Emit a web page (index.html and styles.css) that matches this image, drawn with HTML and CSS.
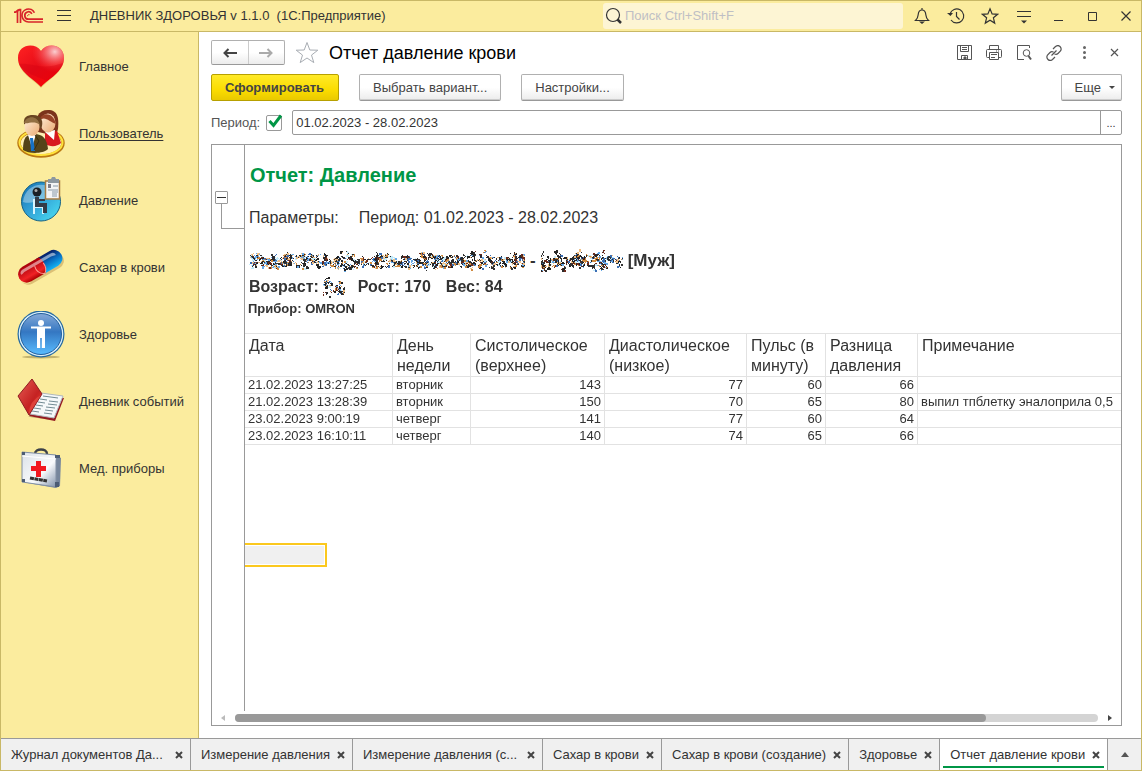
FILE: index.html
```html
<!DOCTYPE html>
<html lang="ru">
<head>
<meta charset="utf-8">
<title>ДНЕВНИК ЗДОРОВЬЯ</title>
<link rel="stylesheet" href="styles.css">
</head>
<body>
<div class="window">
  <header class="titlebar">
    <svg class="logo" width="30" height="16" viewBox="0 0 30 16" fill="none" stroke="#d8232a" stroke-width="1.700">
      <path d="M0 4.200h1.500L3.500 2.500v12.500M6.500 15V1.500H5.500L3 3.500"/>
      <path d="M20.400 4.750A6.500 6.500 0 1 0 14.500 14H29"/>
      <path d="M17.850 5.950A3.700 3.700 0 1 0 14.500 11.200H29"/>
      <path d="M13.500 8.200a1.500 1.500 0 0 1 2-1.500" stroke-width="1"/>
    </svg>
    <button class="icon-btn menu-btn" aria-label="Меню"><svg width="16" height="16" viewBox="0 0 16 16" stroke="#333"><path d="M1 2.500h14M1 7.500h14M1 12.500h14"/></svg></button>
    <span class="app-title">ДНЕВНИК ЗДОРОВЬЯ v 1.1.0&nbsp; (1С:Предприятие)</span>
    <label class="search">
      <svg width="18" height="18" viewBox="0 0 18 18" fill="none" stroke="#333"><circle cx="8" cy="8" r="6.500" stroke-width="1.200"/><path d="m12.500 12.500 3.500 3.500" stroke-width="2.500"/></svg>
      <input type="text" placeholder="Поиск Ctrl+Shift+F" aria-label="Поиск">
    </label>
    <div class="window-tools">
      <button class="icon-btn" aria-label="Оповещения"><svg width="18" height="18" viewBox="0 0 18 18" fill="none" stroke="#333" stroke-width="1.200"><path d="M9 1v2M2.500 13.500C5 11 5 10 5.200 7.500 5.500 4.500 7 3 9 3s3.500 1.500 3.800 4.500C13 10 13 11 15.500 13.500z"/><path d="M6 14.500h6L9 17z" fill="#333" stroke="none"/></svg></button>
      <button class="icon-btn" aria-label="История"><svg width="18" height="18" viewBox="0 0 18 18" fill="none" stroke="#333" stroke-width="1.200"><path d="M3 7A7 7 0 1 1 4 13"/><path d="M9.500 5v4.500l3 3"/><path d="M0 6h6L3.500 9z" fill="#333" stroke="none"/></svg></button>
      <button class="icon-btn" aria-label="Избранное"><svg width="18" height="18" viewBox="0 0 18 18" fill="none" stroke="#333" stroke-width="1.200"><path d="m9 1.800 2.100 5.100 5.500.4-4.200 3.500 1.300 5.300L9 13.200l-4.700 2.900 1.300-5.300L1.400 7.300l5.500-.4z"/></svg></button>
      <button class="icon-btn" aria-label="Настройки панели"><svg width="18" height="18" viewBox="0 0 18 18" stroke="#333"><path d="M2 4.500h14M2 9.500h14"/><path d="M6 13.500h6L9 16.500z" fill="#333" stroke="none"/></svg></button>
      <button class="icon-btn" aria-label="Свернуть"><svg width="18" height="18" viewBox="0 0 18 18" stroke="#333"><path d="M5 13.500h9"/></svg></button>
      <button class="icon-btn" aria-label="Развернуть"><svg width="18" height="18" viewBox="0 0 18 18" fill="none" stroke="#333"><path d="M5.500 5.500h8v8h-8z"/></svg></button>
      <button class="icon-btn" aria-label="Закрыть"><svg width="18" height="18" viewBox="0 0 18 18" stroke="#333" stroke-width="1.200"><path d="m4.500 4.500 9 9m0-9-9 9"/></svg></button>
    </div>
  </header>

  <div class="workspace">
    <nav class="sidebar">
      <a class="nav-item" href="#">
        <svg width="48" height="48" viewBox="0 0 48 48">
          <defs><linearGradient id="heart" x1="0" y1="0" x2="1" y2="1"><stop offset="0" stop-color="#f22"/><stop offset=".45" stop-color="#e80d18"/><stop offset="1" stop-color="#f00"/></linearGradient><radialGradient id="gloss" cx=".8" cy=".15" r=".5"><stop offset="0" stop-color="#fff" stop-opacity=".8"/><stop offset="1" stop-color="#f55" stop-opacity="0"/></radialGradient></defs>
          <path d="M24 45C17 37 1 30 1 15 1 2 18 0 24 8 30 0 47 2 47 15 47 29 31 37 24 45z" fill="#a80" opacity=".25"/>
          <path d="M24 44C17 36 1 29 1 15 1 1 18-1 24 8 30-1 47 1 47 15 47 29 31 36 24 44z" fill="url(#heart)"/>
          <path d="M24 44C17 36 1 29 1 15 1 1 18-1 24 8 30-1 47 1 47 15 47 29 31 36 24 44z" fill="url(#gloss)"/>
          <path d="M2 21C14 19 24 28 46 20 44 28 36 33 30 38 20 33 8 31 2 21z" fill="#d00010" opacity=".35"/>
        </svg>
        <span>Главное</span>
      </a>
      <a class="nav-item nav-item--current" href="#">
        <svg width="48" height="48" viewBox="0 0 48 48">
          <defs><linearGradient id="skin" x1="0" y1="0" x2="1" y2="1"><stop offset="0" stop-color="#fff0da"/><stop offset="1" stop-color="#eaaa72"/></linearGradient></defs>
          <ellipse cx="24" cy="33" rx="22" ry="13" fill="#fff0b4" stroke="#bb7812" stroke-width="3.500"/>
          <ellipse cx="24" cy="32.500" rx="21.500" ry="12.500" fill="none" stroke="#ffe23c" stroke-width="2"/>
          <path d="M21 22C17 8 21 0 31 0c10 0 11 8 10 19l-2 7z" fill="#7b341b"/>
          <path d="M28 23l12-2 4 12c-4 4-11 4-16 1z" fill="#d71920"/>
          <path d="m28 22 10-2-1 10z" fill="#fff"/>
          <ellipse cx="31" cy="13" rx="7.500" ry="9.500" fill="url(#skin)"/>
          <path d="M22 11C24 2 36 1 39 14 32 12 28 5 22 11z" fill="#964326"/>
          <path d="M6 40c0-12 3-16 11-16 9 0 13 5 14 15-5 5-19 5-25 1z" fill="#554418"/>
          <path d="m11 25 8-1-4 14z" fill="#fff"/><path d="m13 28 3 0 2 13-4 0z" fill="#1671c4"/>
          <path d="m18 25 4 6-5 9" fill="none" stroke="#382d10"/>
          <path d="M7 14C6 7 10 5 16 5c9 0 11 7 8 14z" fill="#694522"/>
          <ellipse cx="15" cy="17" rx="7.500" ry="9" fill="url(#skin)"/>
          <path d="M7 13c2-7 13-9 16 2-6-5-11-1-16-2z" fill="#927043"/>
        </svg>
        <span>Пользователь</span>
      </a>
      <a class="nav-item" href="#">
        <svg width="48" height="48" viewBox="0 0 48 48">
          <defs><linearGradient id="ball" x1="0" y1="0" x2="1" y2="1"><stop offset="0" stop-color="#126db0"/><stop offset=".5" stop-color="#34a5d8"/><stop offset="1" stop-color="#4be2f5"/></linearGradient></defs>
          <circle cx="24" cy="24.500" r="19.500" fill="url(#ball)" stroke="#176284"/>
          <path d="M6 25C8 3 38 2 41 22 27 17 19 29 6 25z" fill="#fff" opacity=".35"/>
          <path d="M17 22v15M17 30h9v7" fill="none" stroke="#d7f5ff" stroke-width="2"/>
          <circle cx="20" cy="15" r="4.500" fill="#1b2026"/><circle cx="19" cy="13.500" r="1.500" fill="#aaa"/>
          <path d="M20 20v8h8v8" fill="none" stroke="#343c48" stroke-width="4"/><path d="M22 23h6" stroke="#343c48" stroke-width="2"/>
          <path d="M28.500 4h14v18h-14z" fill="#f3f4f5" stroke="#a77c43" stroke-width="1.500"/><path d="M31 2h3l1-2h3l1 2h3v4H31z" fill="#8d98a0"/>
          <path d="M31 8h3M31 10h3" stroke="#556" stroke-width="1.500"/><path d="M36 9h5M31 13h10M35 15h6M35 17h5M35 19h5" stroke="#8898a6"/>
        </svg>
        <span>Давление</span>
      </a>
      <a class="nav-item" href="#">
        <svg width="48" height="48" viewBox="0 0 48 48">
          <defs><linearGradient id="red" x1="0" y1="0" x2="0" y2="1"><stop offset="0" stop-color="#a7000b"/><stop offset=".7" stop-color="#f02225"/><stop offset="1" stop-color="#a00"/></linearGradient><linearGradient id="blue" x1="0" y1="0" x2="0" y2="1"><stop offset="0" stop-color="#061c64"/><stop offset=".5" stop-color="#086cc0"/><stop offset="1" stop-color="#13b3f4"/></linearGradient></defs>
          <g transform="rotate(-30 24 23)">
            <path d="M8 17h32a8 8 0 0 1 0 16H8a8 8 0 0 1-8-7 8 8 0 0 0 8 5" fill="#965b16" opacity=".3"/>
            <path d="M24 13.500h15.500a8.500 8.500 0 0 1 0 17H24z" fill="url(#blue)"/>
            <path d="M27 13.500H8a8.500 8.500 0 0 0 0 17h17q6-8 2-17z" fill="url(#red)"/>
            <path d="M19 19q-2 8 5 11.500 5-3 4-10" stroke="#ff9b92" fill="none"/>
            <path d="M6 16h33q4 0 4 4-5-2-10-1H7q-5 2-4 0 0-2 3-3z" fill="#fff" opacity=".5"/>
          </g>
        </svg>
        <span>Сахар в крови</span>
      </a>
      <a class="nav-item" href="#">
        <svg width="48" height="48" viewBox="0 0 48 48">
          <defs><linearGradient id="health" x1="0" y1="0" x2="0" y2="1"><stop offset="0" stop-color="#84a8d7"/><stop offset=".45" stop-color="#3477c2"/><stop offset="1" stop-color="#58bcff"/></linearGradient></defs>
          <ellipse cx="24" cy="46" rx="19" ry="1.500" fill="#8c7c3d" opacity=".5"/>
          <circle cx="24" cy="23" r="23.500" fill="#23689f"/><circle cx="24" cy="23" r="22.300" fill="#d9effa"/><circle cx="24" cy="23" r="20.500" fill="url(#health)" stroke="#235f9d"/>
          <circle cx="24" cy="12" r="3" fill="#fff"/><path d="M14 15.500h20v2h-6V37h-3.200V27h-1.600v10H20V17.500h-6z" fill="#fff"/>
        </svg>
        <span>Здоровье</span>
      </a>
      <a class="nav-item" href="#">
        <svg width="48" height="48" viewBox="0 0 48 48">
          <defs><linearGradient id="cover" x1="0" y1="0" x2="1" y2="1"><stop offset="0" stop-color="#e75c54"/><stop offset=".6" stop-color="#c52222"/><stop offset="1" stop-color="#f24434"/></linearGradient></defs>
          <path d="M3 34l10 5 30 4-32-5z" fill="#6e5a2d" opacity=".5"/>
          <path d="M24 18 47 20 38 43 12 38z" fill="#941b22"/><path d="M24 15 46 18 37 40 13 36z" fill="#f5f8fa" stroke="#b0b8bd"/>
          <path d="M15 1 1 18 12 37 25 16z" fill="url(#cover)" stroke="#8f1c21"/><path d="M12 36Q12 23 24 17z" fill="#f96a5b" opacity=".4"/>
          <path d="m26 18 15 2M23 21l7 1M21 24l7 1M19 27l7 1M17 30l7 1M15 33l7 1M32 23l9 1M31 26l9 1M29 29l9 1M28 32l8 1M27 35l8 1" stroke="#738b94"/>
        </svg>
        <span>Дневник событий</span>
      </a>
      <a class="nav-item" href="#">
        <svg width="48" height="48" viewBox="0 0 48 48">
          <defs><linearGradient id="case" x1="0" y1="0" x2="1" y2="1"><stop offset="0" stop-color="#dbe1e8"/><stop offset=".6" stop-color="#f8fafc"/><stop offset="1" stop-color="#8394ac"/></linearGradient></defs>
          <path d="M18 9c0-6 12-6 12 0" fill="none" stroke="#3c4148" stroke-width="2.500"/>
          <path d="M5 7 39 10 44 13 43 41 39 43 5 37z" fill="#76869c"/><path d="M5 7 39 10 39 42 5 37z" fill="url(#case)" stroke="#8290a4"/>
          <path d="M5 11 39 14" stroke="#fff"/><path d="M5 7h3v3H5zm0 27h3v3H5zm33-24h5v3h-5zm0 27h4v5h-4z" fill="#4c5c74"/>
          <path d="M19 16h5v5h5v5h-5v6h-5v-6h-5v-5h5z" fill="#f21820"/><path d="m13 33 17 3" stroke="#333" stroke-width="3" stroke-dasharray="4 .5"/>
        </svg>
        <span>Мед. приборы</span>
      </a>
    </nav>

    <main class="page">
      <div class="page-head">
        <div class="history">
          <button aria-label="Назад"><svg width="16" height="12" viewBox="0 0 16 12" fill="none" stroke="#444" stroke-width="2"><path d="M15 6H3M6.500 2 2.500 6l4 4"/></svg></button>
          <button aria-label="Вперед"><svg width="16" height="12" viewBox="0 0 16 12" fill="none" stroke="#aaa" stroke-width="2"><path d="M1 6h12M9.500 2l4 4-4 4"/></svg></button>
        </div>
        <button class="icon-btn" aria-label="В избранное"><svg width="24" height="24" viewBox="0 0 24 24" fill="none" stroke="#a8adb3"><path d="m12 1.500 2.800 7.500 8 .2-6.300 4.900 2.300 7.500L12 17l-6.800 4.600 2.300-7.500L1.200 9.200l8-.2z"/></svg></button>
        <h1>Отчет давление крови</h1>
        <div class="page-tools">
          <button class="icon-btn" aria-label="Сохранить"><svg width="16" height="16" viewBox="0 0 16 16" fill="none" stroke="#555"><path d="M1.500.500h14v14h-14zM4.500.500v6h8v-6M6 2.500h5M6 4.500h5M5.500 14.500v-4h6v4"/><path d="M8 12h2v2H8z" fill="#555"/></svg></button>
          <button class="icon-btn" aria-label="Печать"><svg width="16" height="16" viewBox="0 0 16 16" fill="none" stroke="#555"><path d="M3.500 4V.500h9V4M3.500 12.500h-2Q.5 12.500.5 11.500v-6Q.5 4.500 1.500 4.500h13q1 0 1 1v6q0 1-1 1h-2M3.500 7.500h9v7h-9zM5 9.500h6M5 12.500h4M10 6h1M12 6h1"/></svg></button>
          <button class="icon-btn" aria-label="Просмотр"><svg width="16" height="16" viewBox="0 0 16 16" fill="none" stroke="#555"><path d="M13.500 3V.500h-12v14H8"/><circle cx="10.500" cy="8" r="3.300"/><path d="m12.500 11 2.500 3.500" stroke-width="2"/></svg></button>
          <button class="icon-btn" aria-label="Ссылка"><svg width="16" height="16" viewBox="0 0 16 16" fill="none" stroke="#555" stroke-width="1.200"><path d="m7 4 2.500-2.500q2.500-2 4.500 0t.5 4.500L12 8.500q-1.500 1.500-3.500.5M9 12l-2.500 2.500q-2.500 2-4.500 0T1.500 10L4 7.500Q5.500 6 7.500 7M5.500 10.500l5-5"/></svg></button>
          <button class="icon-btn" aria-label="Еще действия"><svg width="16" height="16" viewBox="0 0 16 16" fill="#666"><circle cx="8.500" cy="2.500" r="1.500"/><circle cx="8.500" cy="7.500" r="1.500"/><circle cx="8.500" cy="12.500" r="1.500"/></svg></button>
          <button class="icon-btn" aria-label="Закрыть отчет"><svg width="16" height="16" viewBox="0 0 16 16" stroke="#555" stroke-width="1.200"><path d="m5 4 7 7m0-7-7 7"/></svg></button>
        </div>
      </div>

      <div class="commands">
        <button class="btn btn--primary">Сформировать</button>
        <button class="btn">Выбрать вариант...</button>
        <button class="btn">Настройки...</button>
        <button class="btn btn--more">Еще <svg width="6" height="3" viewBox="0 0 6 3"><path d="M0 0h6L3 3z" fill="#444"/></svg></button>
      </div>

      <div class="filter">
        <label for="use-period">Период:</label>
        <span class="check">
          <input type="checkbox" id="use-period" checked>
          <svg width="18" height="18" viewBox="0 0 18 18" fill="none" stroke="#009646" stroke-width="3"><path d="m3.500 8 4 4.500L15 2.500"/></svg>
        </span>
        <div class="field">
          <input type="text" value="01.02.2023 - 28.02.2023" aria-label="Значение периода">
          <button aria-label="Выбрать период">...</button>
        </div>
      </div>

      <section class="report">
        <div class="report-body">
          <div class="outline">
            <button class="fold" aria-label="Свернуть группу"><svg width="11" height="11" viewBox="0 0 11 11"><path d="M1 5.500h9" stroke="#333"/></svg></button>
            <div class="fold-line"></div>
          </div>
          <div class="sheet">
            <h2>Отчет: Давление</h2>
            <p class="params"><span>Параметры:</span><span>Период: 01.02.2023 - 28.02.2023</span></p>
            <p class="person"><canvas class="scribble" width="276" height="24" data-seed="7"></canvas><span>-</span><canvas class="scribble" width="82" height="24" data-seed="19"></canvas><span>[Муж]</span></p>
            <p class="person person--stats"><span>Возраст:</span><canvas class="scribble" width="22" height="24" data-seed="31"></canvas><span class="stat">Рост: 170</span><span class="stat">Вес: 84</span></p>
            <p class="device">Прибор: OMRON</p>
            <table class="data">
              <colgroup><col class="c-date"><col class="c-day"><col class="c-sys"><col class="c-dia"><col class="c-pulse"><col class="c-diff"><col></colgroup>
              <thead>
                <tr><th>Дата</th><th>День недели</th><th>Систолическое (верхнее)</th><th>Диастолическое (низкое)</th><th>Пульс (в минуту)</th><th>Разница давления</th><th>Примечание</th></tr>
              </thead>
              <tbody>
                <tr><td>21.02.2023 13:27:25</td><td>вторник</td><td class="num">143</td><td class="num">77</td><td class="num">60</td><td class="num">66</td><td></td></tr>
                <tr><td>21.02.2023 13:28:39</td><td>вторник</td><td class="num">150</td><td class="num">70</td><td class="num">65</td><td class="num">80</td><td>выпил тпблетку эналоприла 0,5</td></tr>
                <tr><td>23.02.2023 9:00:19</td><td>четверг</td><td class="num">141</td><td class="num">77</td><td class="num">60</td><td class="num">64</td><td></td></tr>
                <tr><td>23.02.2023 16:10:11</td><td>четверг</td><td class="num">140</td><td class="num">74</td><td class="num">65</td><td class="num">66</td><td></td></tr>
              </tbody>
            </table>
            <div class="cell-cursor"></div>
          </div>
        </div>
        <div class="scrollbar">
          <svg width="4" height="6" viewBox="0 0 4 6"><path d="M4 0v6L0 3z" fill="#bbb"/></svg>
          <div class="track"><div class="thumb"></div></div>
          <svg width="4" height="6" viewBox="0 0 4 6"><path d="M0 0v6l4-3z" fill="#444"/></svg>
        </div>
      </section>
    </main>
  </div>

  <footer class="tabs">
    <div class="tab tab--long"><a href="#">Журнал документов Да...</a><button aria-label="Закрыть"><svg width="8" height="8" viewBox="0 0 8 8"><path d="m1 1 6 6m0-6-6 6"/></svg></button></div>
    <div class="tab"><a href="#">Измерение давления</a><button aria-label="Закрыть"><svg width="8" height="8" viewBox="0 0 8 8"><path d="m1 1 6 6m0-6-6 6"/></svg></button></div>
    <div class="tab tab--long"><a href="#">Измерение давления (с...</a><button aria-label="Закрыть"><svg width="8" height="8" viewBox="0 0 8 8"><path d="m1 1 6 6m0-6-6 6"/></svg></button></div>
    <div class="tab"><a href="#">Сахар в крови</a><button aria-label="Закрыть"><svg width="8" height="8" viewBox="0 0 8 8"><path d="m1 1 6 6m0-6-6 6"/></svg></button></div>
    <div class="tab"><a href="#">Сахар в крови (создание)</a><button aria-label="Закрыть"><svg width="8" height="8" viewBox="0 0 8 8"><path d="m1 1 6 6m0-6-6 6"/></svg></button></div>
    <div class="tab"><a href="#">Здоровье</a><button aria-label="Закрыть"><svg width="8" height="8" viewBox="0 0 8 8"><path d="m1 1 6 6m0-6-6 6"/></svg></button></div>
    <div class="tab tab--active"><a href="#">Отчет давление крови</a><button aria-label="Закрыть"><svg width="8" height="8" viewBox="0 0 8 8"><path d="m1 1 6 6m0-6-6 6"/></svg></button></div>
    <button class="tabs-more" aria-label="Все окна"><svg width="8" height="5" viewBox="0 0 8 5"><path d="M4 0l4 5H0z" fill="#555"/></svg></button>
  </footer>
</div>
<script src="scribble.js"></script>
</body>
</html>
```

FILE: styles.css
```css
* { box-sizing: border-box; }

body {
  margin: 0;
  font: 13px/16px "Liberation Sans", Arial, sans-serif;
  color: #333;
  background: #fff;
}

h1, h2, p { margin: 0; }
a { color: inherit; text-decoration: none; }
svg { display: block; flex: none; }
button, input { font: inherit; color: inherit; }
button { padding: 0; border: 0; background: none; }

.window {
  display: flex;
  flex-direction: column;
  min-height: 100vh;
  border: 1px solid #c9b866;
}

.titlebar {
  display: flex;
  align-items: center;
  height: 31px;
  padding: 0 6px 0 13px;
  background: #fbec9e;
  border-bottom: 1px solid #c9b866;
}
.icon-btn { display: grid; place-items: center; }
.menu-btn { margin-left: 12px; }
.app-title { margin-left: 18px; }
.search {
  display: flex;
  align-items: center;
  gap: 2px;
  width: 300px;
  height: 26px;
  margin-left: auto;
  padding-left: 2px;
  background: #fdf5d4;
  border-radius: 3px;
}
.search input {
  flex: 1;
  min-width: 0;
  padding: 0;
  border: 0;
  outline: 0;
  background: none;
}
.search input::placeholder { color: #bfbfc4; opacity: 1; }
.window-tools { display: flex; gap: 16px; margin-left: 10px; }

.workspace { display: flex; flex: 1; }

.sidebar {
  display: flex;
  flex-direction: column;
  gap: 19px;
  width: 198px;
  flex: none;
  padding: 11px 0 0 16px;
  background: #fbec9e;
  border-right: 1px solid #c9b866;
}
.nav-item { display: flex; align-items: center; gap: 14px; height: 48px; }
.nav-item--current span { text-decoration: underline; text-underline-offset: 2px; }

.page {
  display: flex;
  flex-direction: column;
  flex: 1;
  min-width: 0;
  padding: 8px 19px 12px 12px;
}
.page-head { display: flex; align-items: center; gap: 10px; height: 25px; }
.history {
  display: flex;
  width: 74px;
  height: 25px;
  border: 1px solid #b0b0b0;
  border-bottom-color: #999;
  border-radius: 2px;
  background: linear-gradient(#fff 50%, #ececec);
}
.history button { flex: 1; display: grid; place-items: center; }
.history button + button { border-left: 1px solid #ccc; }
h1 { font-size: 18px; line-height: 24px; font-weight: normal; color: #000; }
.page-tools { display: flex; gap: 14px; margin-left: auto; }

.commands { display: flex; gap: 20px; margin-top: 9px; }
.btn {
  height: 27px;
  padding: 0 13px;
  border: 1px solid #b0b0b0;
  border-bottom-color: #999;
  border-radius: 2px;
  background: linear-gradient(#fff 50%, #ececec);
  box-shadow: inset 0 -1px #ccc;
  color: #444;
}
.btn--primary {
  padding: 0 14px 0 13px;
  font-weight: bold;
  border-color: #b7a000;
  background: linear-gradient(#ffea28, #fbdc00 60%, #e9c900);
  box-shadow: none;
}
.btn--more { display: flex; align-items: center; gap: 8px; margin-left: auto; padding-right: 6px; }

.filter { display: flex; align-items: center; margin-top: 9px; color: #555; }
.check { position: relative; margin: 0 10px 0 6px; }
.check input {
  display: block;
  appearance: none;
  width: 16px;
  height: 16px;
  margin: 0;
  border: 1px solid #999;
  border-radius: 2px;
  background: #fff;
}
.check svg { position: absolute; left: 0; top: -2px; pointer-events: none; }
.check input:not(:checked) + svg { display: none; }
.field {
  display: flex;
  flex: 1;
  height: 25px;
  border: 1px solid #999;
  border-radius: 2px;
}
.field input {
  flex: 1;
  min-width: 0;
  padding: 0 3px;
  border: 0;
  outline: 0;
  background: none;
  color: #333;
}
.field button { width: 21px; border-left: 1px solid #999; color: #333; font-size: 11px; }

.report {
  display: flex;
  flex-direction: column;
  flex: 1;
  margin-top: 9px;
  border: 1px solid #999;
}
.report-body { display: flex; flex: 1; }
.outline {
  width: 33px;
  flex: none;
  padding: 46px 0 0 3px;
  border-right: 1px solid #999;
}
.fold {
  display: grid;
  place-items: center;
  width: 13px;
  height: 13px;
  border: 1px solid #999;
  border-radius: 1px;
  background: #fff;
}
.fold-line {
  height: 25px;
  margin-left: 6px;
  border: solid #999;
  border-width: 0 0 1px 1px;
}

.sheet { flex: 1; min-width: 0; padding-top: 18px; }
h2 { padding-left: 5px; font-size: 20px; line-height: 24px; color: #009646; }
.params {
  display: flex;
  gap: 20px;
  margin-top: 19px;
  padding-left: 4px;
  font-size: 16px;
  line-height: 24px;
}
.person {
  display: flex;
  align-items: center;
  gap: 5px;
  margin-top: 18px;
  padding-left: 4px;
  font-size: 17px;
  line-height: 26px;
  font-weight: bold;
}
.person--stats { gap: 4px; margin-top: 0; font-size: 16px; }
.scribble { display: block; flex: none; }
.stat { padding: 0 2px 0 9px; }
.device { padding-left: 3px; line-height: 18px; font-weight: bold; }

.data {
  width: 100%;
  margin-top: 15px;
  table-layout: fixed;
  border-collapse: separate;
  border-spacing: 0;
  border-top: 1px solid #e2e2e2;
}
.data th, .data td {
  border: solid #e2e2e2;
  border-width: 0 1px 1px 0;
}
.data th:last-child, .data td:last-child { border-right: 0; }
.data th {
  height: 43px;
  padding: 2px 4px 0;
  vertical-align: top;
  text-align: left;
  font-size: 16px;
  line-height: 20px;
  font-weight: normal;
}
.data td { height: 17px; padding: 0 3px; white-space: nowrap; }
.data .num { text-align: right; }
.c-date { width: 148px; }
.c-day { width: 78px; }
.c-sys { width: 134px; }
.c-dia { width: 142px; }
.c-pulse { width: 79px; }
.c-diff { width: 92px; }

.cell-cursor {
  width: 82px;
  height: 24px;
  margin-top: 98px;
  padding: 1px 1px 1px 0;
  border: 2px solid #fbc81e;
  border-left: 0;
  background: #f0f0f0 content-box;
}

.scrollbar {
  display: flex;
  align-items: center;
  gap: 10px;
  height: 14px;
  padding: 0 9px;
}
.track { flex: 1; height: 8px; border-radius: 4px; background: #d4d4d4; }
.thumb { width: 87%; height: 8px; border-radius: 4px; background: #999; }

.tabs {
  display: flex;
  height: 32px;
  border-top: 1px solid #999;
  background: #f0f0f0;
}
.tab {
  display: flex;
  align-items: center;
  justify-content: space-between;
  gap: 7px;
  padding: 0 7px 0 10px;
  border-right: 1px solid #999;
  white-space: nowrap;
}
.tab--long { width: 190px; }
.tab--active { background: #fff; box-shadow: inset 3px 0 #fff, inset -3px 0 #fff, inset 0 -2px #fff, inset 0 -4px #009646; }
.tab path { stroke: #444; stroke-width: 2; fill: none; }
.tabs-more { flex: 1; display: grid; place-items: center; }
```

FILE: scribble.js
```js
// Pixel-pen scribbles that hide personal data.
const inks = ["#222", "#2b2b30", "#333", "#222", "#2a2a2a", "#d08a40", "#f0bf85", "#3c6fb4", "#66a9e8", "#c4ecfb", "#6b2a1c", "#fff"];

document.querySelectorAll(".scribble").forEach((canvas) => {
  let seed = Number(canvas.dataset.seed);
  const rnd = () => {
    seed = (seed * 16807) % 2147483647;
    return seed / 2147483647;
  };
  for (let i = 0; i < 20; i++) rnd();
  const ctx = canvas.getContext("2d");
  const mid = canvas.height / 2;
  for (let left = 0; left < canvas.width - 4; left += 10) {
    // Each letter is covered by a few wandering strokes.
    const reach = 6 + rnd() * 4;
    for (let stroke = 0; stroke < 11; stroke++) {
      let x = left + 1 + rnd() * 8;
      let y = mid + (rnd() * 2 - 1) * reach;
      let ink = inks[Math.floor(rnd() * inks.length)];
      for (let step = 0; step < 12; step++) {
        if (rnd() > 0.6) ink = inks[Math.floor(rnd() * inks.length)];
        ctx.fillStyle = ink;
        const size = rnd() > 0.8 ? 2 : 1;
        ctx.fillRect(Math.floor(x), Math.floor(y), size, size);
        x += rnd() * 3 - 1.5;
        y += rnd() * 3 - 1.5 + (mid - y) * 0.05;
      }
    }
  }
});
```
